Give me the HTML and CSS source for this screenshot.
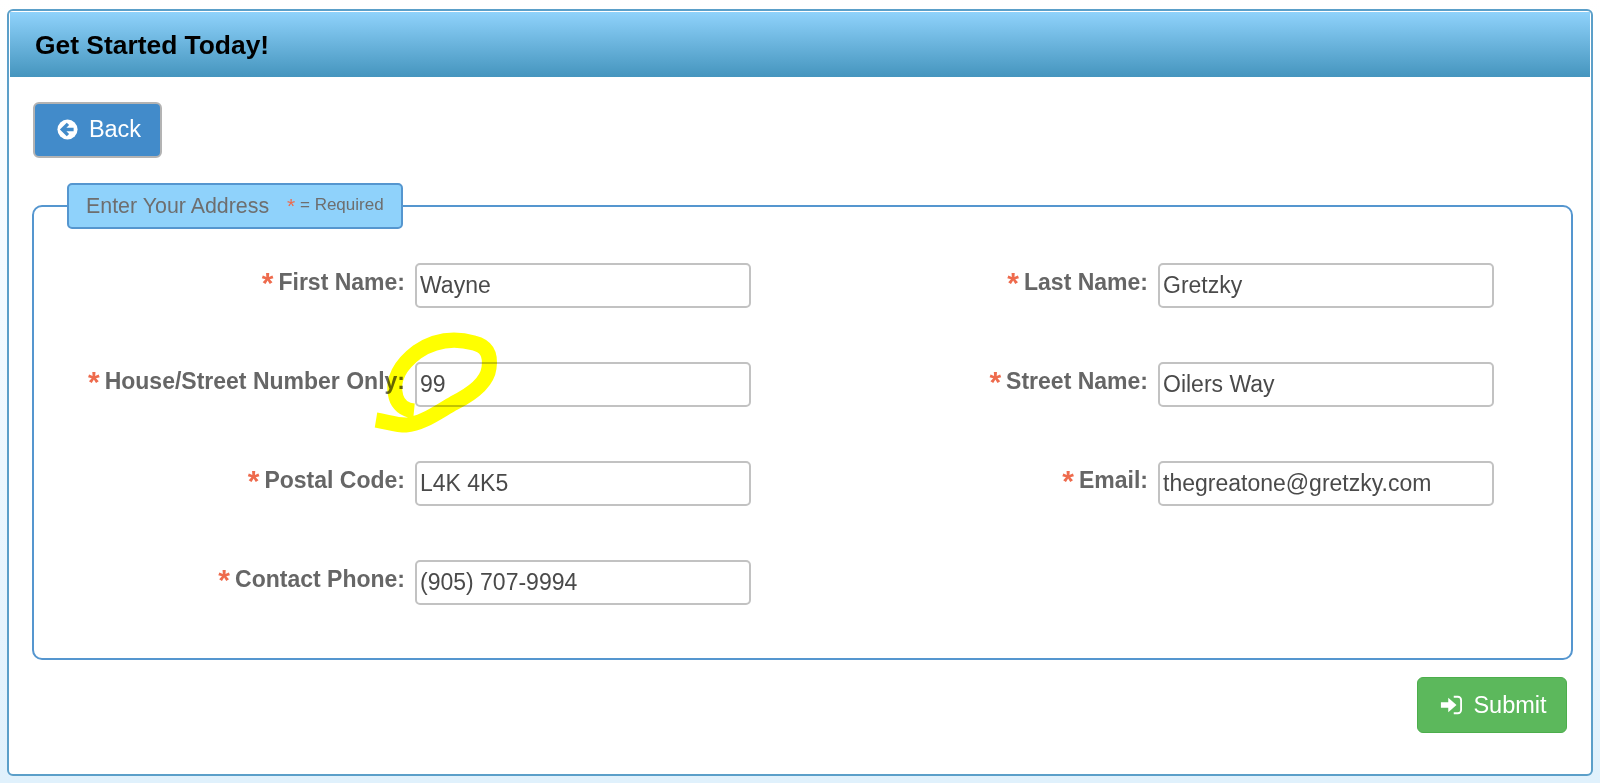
FILE: index.html
```html
<!DOCTYPE html>
<html lang="en">

<head>
    <title>Get Started Today!</title>
    <link rel="stylesheet" href="styles.css">
</head>

<body>
    <div class="panel">
        <div class="panel-heading">
            <h3>Get Started Today!</h3>
        </div>
        <div class="panel-body">
            <a class="btn btn-back">
                <svg class="btn-icon" viewBox="0 0 24 24">
                    <circle cx="12" cy="12" r="11.5" fill="#fff" />
                    <path d="M12.5 5.5 6 12l6.500 6.500M6.500 12H19" fill="none" stroke="#428bca" stroke-width="3.800" />
                </svg>
                Back
            </a>
            <fieldset class="address">
                <legend>Enter Your Address <span class="legend-note"><span class="req">*</span> = Required</span></legend>
                <div class="form-grid">
                    <div class="field">
                        <label><span class="req">*</span>First Name:</label>
                        <input type="text" value="Wayne">
                    </div>
                    <div class="field">
                        <label><span class="req">*</span>Last Name:</label>
                        <input type="text" value="Gretzky">
                    </div>
                    <div class="field">
                        <label><span class="req">*</span>House/Street Number Only:</label>
                        <input type="text" value="99">
                    </div>
                    <div class="field">
                        <label><span class="req">*</span>Street Name:</label>
                        <input type="text" value="Oilers Way">
                    </div>
                    <div class="field">
                        <label><span class="req">*</span>Postal Code:</label>
                        <input type="text" value="L4K 4K5">
                    </div>
                    <div class="field">
                        <label><span class="req">*</span>Email:</label>
                        <input type="text" value="thegreatone@gretzky.com">
                    </div>
                    <div class="field">
                        <label><span class="req">*</span>Contact Phone:</label>
                        <input type="text" value="(905) 707-9994">
                    </div>
                </div>
            </fieldset>
            <div class="actions">
                <a class="btn btn-submit">
                    <svg class="btn-icon icon-login" viewBox="0 0 24 24">
                        <path d="M1 9h8V4l9 8-9 8v-5H1z" fill="#fff" />
                        <path d="M15 3h4.500a3.500 3.500 0 0 1 3.500 3.500v11a3.500 3.500 0 0 1-3.500 3.500H15" fill="none" stroke="#fff" stroke-width="2" />
                    </svg>
                    Submit
                </a>
            </div>
        </div>
    </div>

    <!-- highlighter mark pasted over the house number -->
    <svg class="scribble" viewBox="0 0 200 130">
        <path d="M36 110C48 112 56 115 66 115C82 114 98 102 114 93C130 85 147 74 149 58C151 44 146 36 134 33C116 28 96 29 77 42C61 54 51 70 56 87C58 94 64 100 74 101" fill="none" stroke="#ffff00" stroke-width="15" />
    </svg>
</body>

</html>
```

FILE: styles.css
```css
html,
body {
    margin: 0;
    padding: 0;
    height: 100%;
}

body {
    font-family: "Liberation Sans", Arial, sans-serif;
    background: linear-gradient(180deg, #ffffff 0%, #f3faff 40%, #e0f1fc 100%);
    padding: 9px 7px 7px 7px;
    box-sizing: border-box;
    overflow: hidden;
    position: relative;
}

.panel {
    height: 767px;
    box-sizing: border-box;
    background: #fff;
    border: 2px solid #5b9fc9;
    border-radius: 6px;
    padding: 1px;
    overflow: hidden;
}

.panel-heading {
    height: 65px;
    display: flex;
    align-items: center;
    padding-left: 25px;
    background: linear-gradient(180deg, #8fd2fb 0%, #4595be 100%);
}

.panel-heading h3 {
    margin: 2px 0 0 0;
    font-size: 26.400px;
    font-weight: bold;
    color: #000;
}

.panel-body {
    padding: 25px 19px 0 23px;
}

.btn {
    display: inline-flex;
    align-items: center;
    justify-content: center;
    gap: 11px;
    box-sizing: border-box;
    height: 56px;
    font-size: 23.500px;
    color: #fff;
    border-radius: 6px;
}

.btn-icon {
    width: 21px;
    height: 21px;
}

.btn-back {
    width: 129px;
    padding: 0 0 2px 3px;
    background-color: #428bca;
    border: 2px solid #b3b3b3;
}

.address {
    margin: 25px 0 0 -1px;
    padding: 0;
    width: 1541px;
    height: 477px;
    box-sizing: border-box;
    border: 2px solid #5596cf;
    border-radius: 10px;
    min-width: 0;
}

.address legend {
    margin-left: 33px;
    padding: 0 15px 0 17px;
    box-sizing: border-box;
    width: 336px;
    height: 46px;
    line-height: 43px;
    font-size: 21.400px;
    color: #6e6e6e;
    background-color: #8fd2fb;
    border: 2px solid #5596cf;
    border-radius: 5px;
    white-space: nowrap;
}

.legend-note {
    font-size: 17px;
    margin-left: 12px;
    position: relative;
    top: -3px;
}

.legend-note .req {
    font-size: 21px;
    font-weight: normal;
    margin: 0;
}

.form-grid {
    display: grid;
    grid-template-columns: 716px 715px;
    column-gap: 28px;
    row-gap: 54px;
    padding-top: 34px;
}

.field {
    display: grid;
    grid-template-columns: 371px 336px;
    column-gap: 10px;
    align-items: start;
}

.form-grid .field:nth-child(even) {
    grid-template-columns: 370px 336px;
}

.field label {
    text-align: right;
    font-size: 23px;
    font-weight: bold;
    color: #666;
    line-height: 38px;
    white-space: nowrap;
}

.req {
    color: #ee6b4d;
    font-size: 30px;
    font-weight: bold;
    margin-right: 5px;
    line-height: 20px;
    vertical-align: -3px;
}

.field input {
    box-sizing: border-box;
    width: 336px;
    height: 45px;
    padding: 0 3px;
    font-family: "Liberation Sans", Arial, sans-serif;
    font-size: 23px;
    color: #4a4a4a;
    background: #fff;
    border: 2px solid #c2c2c2;
    border-radius: 5px;
    outline: none;
}

.actions {
    display: flex;
    justify-content: flex-end;
    padding: 17px 4px 0 0;
}

.btn-submit {
    width: 150px;
    padding-left: 3px;
    background-color: #5cb85c;
    border: 1px solid #4cae4c;
}

.icon-login {
    width: 22px;
    height: 22px;
}

.scribble {
    position: absolute;
    left: 340px;
    top: 310px;
    width: 200px;
    height: 130px;
    mix-blend-mode: multiply;
}
```
